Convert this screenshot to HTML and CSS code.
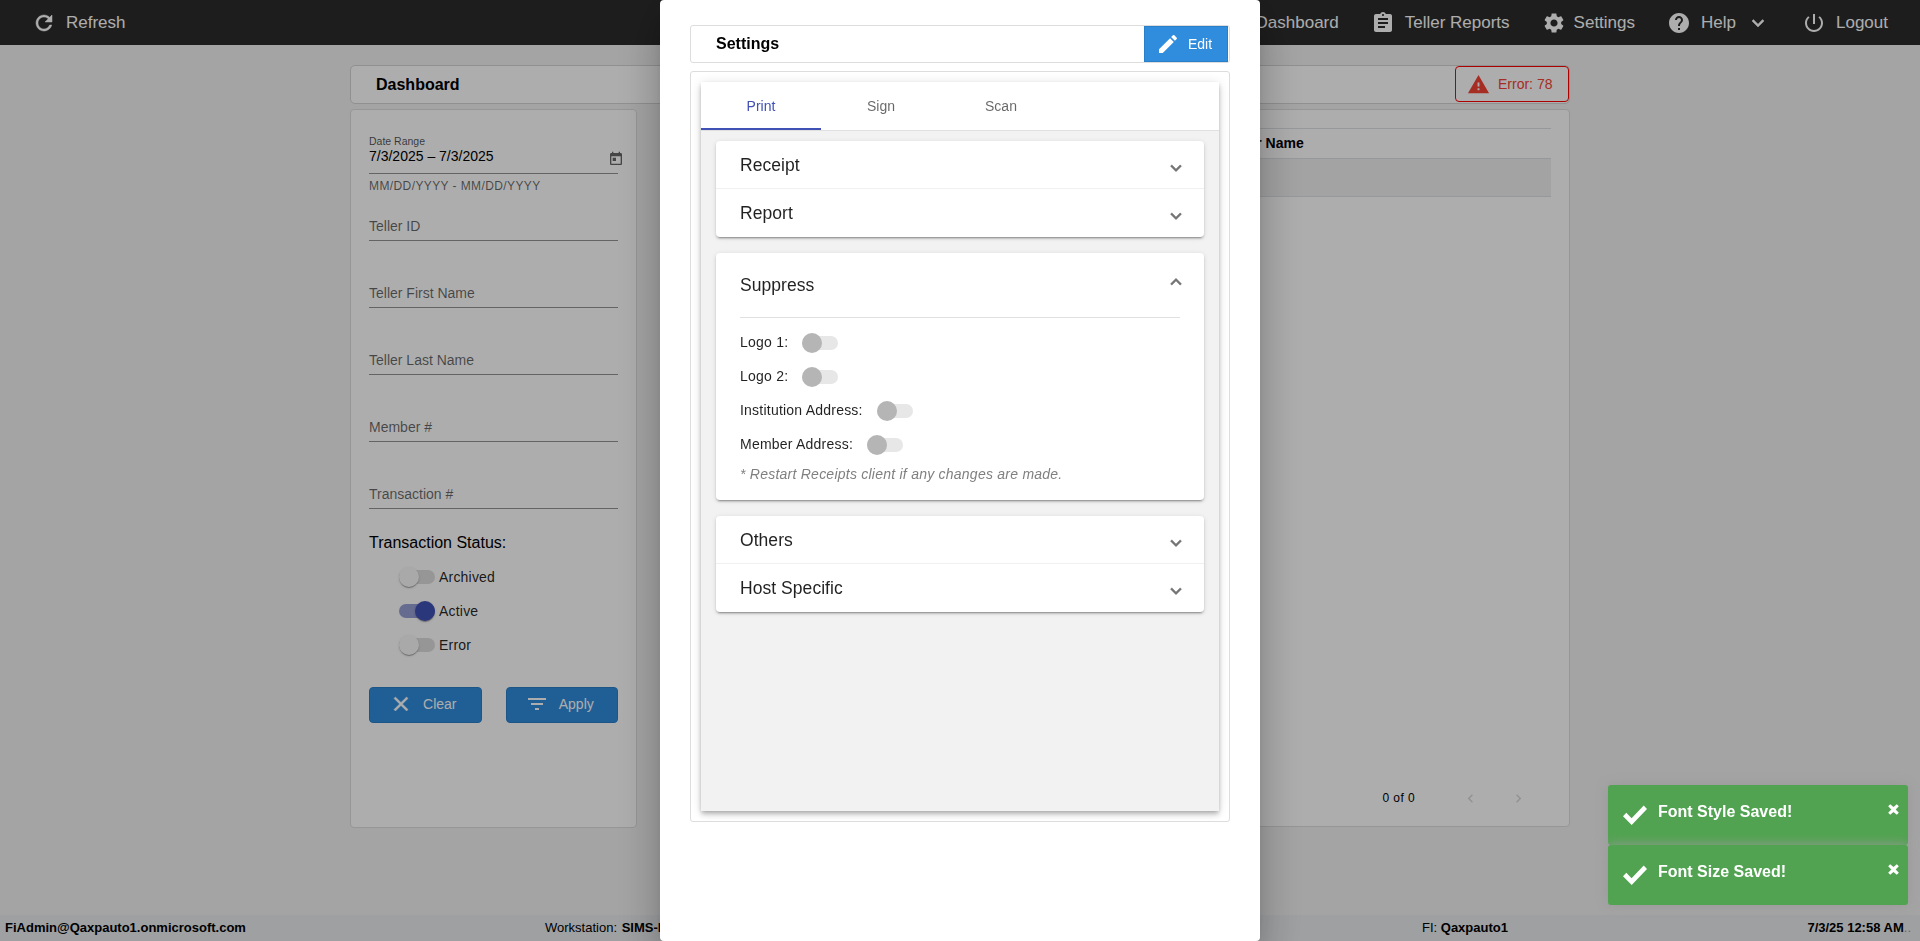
FILE: index.html
```html
<!DOCTYPE html>
<html lang="en">

<head>
    <meta charset="UTF-8">
    <meta name="viewport" content="width=device-width, initial-scale=1.0">
    <title>Dashboard</title>
    <link rel="stylesheet" href="styles.css">
</head>

<body>
    <!-- Icon definitions -->
    <svg class="icon-defs" width="0" height="0">
        <symbol id="refresh" viewBox="0 0 24 24"><path d="M17.65 6.35C16.2 4.9 14.21 4 12 4c-4.42 0-7.99 3.58-7.99 8s3.57 8 7.99 8c3.73 0 6.84-2.55 7.73-6h-2.08c-.82 2.33-3.04 4-5.65 4-3.31 0-6-2.69-6-6s2.69-6 6-6c1.66 0 3.14.69 4.22 1.78L13 11h7V4l-2.35 2.35z"/></symbol>
        <symbol id="report" viewBox="0 0 24 24"><path d="M19 3h-4.18C14.4 1.84 13.3 1 12 1c-1.3 0-2.4.84-2.82 2H5c-1.1 0-2 .9-2 2v14c0 1.1.9 2 2 2h14c1.1 0 2-.9 2-2V5c0-1.1-.9-2-2-2zm-7 0c.55 0 1 .45 1 1s-.45 1-1 1-1-.45-1-1 .45-1 1-1zm2 14H7v-2h7v2zm3-4H7v-2h10v2zm0-4H7V7h10v2z"/></symbol>
        <symbol id="settings" viewBox="0 0 24 24"><path d="M19.14 12.94c.04-.3.06-.61.06-.94 0-.32-.02-.64-.07-.94l2.03-1.58c.18-.14.23-.41.12-.61l-1.92-3.32c-.12-.22-.37-.29-.59-.22l-2.39.96c-.5-.38-1.03-.7-1.62-.94L14.4 2.81c-.04-.24-.24-.41-.48-.41h-3.84c-.24 0-.43.17-.47.41L9.25 5.35C8.66 5.59 8.12 5.92 7.63 6.29L5.24 5.33c-.22-.08-.47 0-.59.22L2.74 8.87c-.12.21-.08.47.12.61l2.03 1.58C4.84 11.36 4.8 11.69 4.8 12s.02.64.07.94l-2.03 1.58c-.18.14-.23.41-.12.61l1.92 3.32c.12.22.37.29.59.22l2.39-.96c.5.38 1.03.7 1.62.94l.36 2.54c.05.24.24.41.48.41h3.84c.24 0 .44-.17.47-.41l.36-2.54c.59-.24 1.13-.56 1.62-.94l2.39.96c.22.08.47 0 .59-.22l1.92-3.32c.12-.22.07-.47-.12-.61l-2.01-1.58zM12 15.6c-1.98 0-3.6-1.62-3.6-3.6s1.62-3.6 3.6-3.6 3.6 1.62 3.6 3.6-1.62 3.6-3.6 3.6z"/></symbol>
        <symbol id="help" viewBox="0 0 24 24"><path d="M12 2C6.48 2 2 6.48 2 12s4.48 10 10 10 10-4.48 10-10S17.52 2 12 2zm1 17h-2v-2h2v2zm2.07-7.75l-.9.92C13.45 12.9 13 13.5 13 15h-2v-.5c0-1.1.45-2.1 1.17-2.83l1.24-1.26c.37-.36.59-.86.59-1.41 0-1.1-.9-2-2-2s-2 .9-2 2H8c0-2.21 1.79-4 4-4s4 1.79 4 4c0 .88-.36 1.68-.93 2.25z"/></symbol>
        <symbol id="expand" viewBox="0 0 24 24"><path d="M16.59 8.59L12 13.17 7.41 8.59 6 10l6 6 6-6z"/></symbol>
        <symbol id="power" viewBox="0 0 24 24"><path d="M13 3h-2v10h2V3zm4.83 2.17l-1.42 1.42C17.99 7.86 19 9.81 19 12c0 3.87-3.13 7-7 7s-7-3.13-7-7c0-2.19 1.01-4.14 2.58-5.42L6.17 5.17C4.23 6.82 3 9.26 3 12c0 4.97 4.03 9 9 9s9-4.03 9-9c0-2.74-1.23-5.18-3.17-6.83z"/></symbol>
        <symbol id="warning" viewBox="0 0 24 24"><path d="M1 21h22L12 2 1 21zm12-3h-2v-2h2v2zm0-4h-2v-4h2v4z"/></symbol>
        <symbol id="edit" viewBox="0 0 24 24"><path d="M3 17.25V21h3.75L17.81 9.94l-3.75-3.75L3 17.25zM20.71 7.04c.39-.39.39-1.02 0-1.41l-2.34-2.34c-.39-.39-1.02-.39-1.41 0l-1.83 1.83 3.75 3.75 1.83-1.83z"/></symbol>
        <symbol id="today" viewBox="0 0 24 24"><path d="M19 3h-1V1h-2v2H8V1H6v2H5c-1.11 0-1.99.9-1.99 2L3 19c0 1.1.89 2 2 2h14c1.1 0 2-.9 2-2V5c0-1.1-.9-2-2-2zm0 16H5V8h14v11zM7 10h5v5H7z"/></symbol>
        <symbol id="filter" viewBox="0 0 24 24"><path d="M10 18h4v-2h-4v2zM3 6v2h18V6H3zm3 7h12v-2H6v2z"/></symbol>
        <symbol id="close" viewBox="0 0 24 24"><path d="M19 6.41L17.59 5 12 10.59 6.41 5 5 6.41 10.59 12 5 17.59 6.41 19 12 13.41 17.59 19 19 17.59 13.41 12z"/></symbol>
        <symbol id="prev" viewBox="0 0 24 24"><path d="M15.41 7.41L14 6l-6 6 6 6 1.41-1.41L10.83 12z"/></symbol>
        <symbol id="next" viewBox="0 0 24 24"><path d="M10 6L8.59 7.41 13.17 12l-4.58 4.59L10 18l6-6z"/></symbol>
        <symbol id="check" viewBox="0 0 24 24"><path d="M0 13.2L3.3 9.8 8.6 15.2 20.7 2.6 24 6 8.7 22z"/></symbol>
        <symbol id="times" viewBox="0 0 12 12"><path d="M2.4.2L6 3.4 9.6.2 11.8 2.4 8.4 6l3.4 3.6-2.2 2.2L6 8.6l-3.6 3.2L.2 9.6 3.6 6 .2 2.4z"/></symbol>
    </svg>

    <!-- Toolbar -->
    <nav class="toolbar">
        <a href="#" class="nav-item refresh"><svg class="icon bold"><use href="#refresh"/></svg>Refresh</a>
        <a href="#" class="nav-item dashboard">Dashboard</a>
        <a href="#" class="nav-item reports"><svg class="icon"><use href="#report"/></svg>Teller Reports</a>
        <a href="#" class="nav-item settings"><svg class="icon"><use href="#settings"/></svg>Settings</a>
        <a href="#" class="nav-item help"><svg class="icon"><use href="#help"/></svg>Help<svg class="icon bold"><use href="#expand"/></svg></a>
        <a href="#" class="nav-item logout"><svg class="icon"><use href="#power"/></svg>Logout</a>
    </nav>

    <!-- Dashboard -->
    <main class="page">
        <div class="page-title">
            <h1>Dashboard</h1>
            <button class="error-btn"><svg class="icon"><use href="#warning"/></svg>Error: 78</button>
        </div>

        <div class="columns">
            <form class="panel filters">
                <div class="field date-field">
                    <div class="date-text">
                        <label>Date Range</label>
                        <span>7/3/2025 – 7/3/2025</span>
                    </div>
                    <svg class="icon"><use href="#today"/></svg>
                </div>
                <div class="hint">MM/DD/YYYY - MM/DD/YYYY</div>
                <div class="field">Teller ID</div>
                <div class="field">Teller First Name</div>
                <div class="field">Teller Last Name</div>
                <div class="field">Member #</div>
                <div class="field">Transaction #</div>

                <h2>Transaction Status:</h2>
                <div class="status-list">
                    <div class="toggle-row"><span class="toggle"></span>Archived</div>
                    <div class="toggle-row"><span class="toggle on"></span>Active</div>
                    <div class="toggle-row"><span class="toggle"></span>Error</div>
                </div>

                <div class="filter-buttons">
                    <button type="button" class="btn"><svg class="icon bold"><use href="#close"/></svg>Clear</button>
                    <button type="button" class="btn"><svg class="icon"><use href="#filter"/></svg>Apply</button>
                </div>
            </form>

            <section class="panel results">
                <div class="table">
                    <div class="table-head">Member Name</div>
                    <div class="table-row"></div>
                </div>
                <div class="paginator">
                    <span>0 of 0</span>
                    <svg class="icon"><use href="#prev"/></svg>
                    <svg class="icon"><use href="#next"/></svg>
                </div>
            </section>
        </div>
    </main>

    <!-- Footer -->
    <footer class="footer">
        <div class="user"><b>FiAdmin@Qaxpauto1.onmicrosoft.com</b></div>
        <div class="workstation">Workstation: <b>SIMS-I</b></div>
        <div class="fi">FI: <b>Qaxpauto1</b></div>
        <div class="time"><b>7/3/25 12:58 AM</b><span>..</span></div>
    </footer>

    <!-- Settings dialog -->
    <div class="backdrop">
        <div class="dialog">
            <div class="dialog-title">
                <h1>Settings</h1>
                <button class="btn edit-btn"><svg class="icon"><use href="#edit"/></svg>Edit</button>
            </div>
            <div class="dialog-body">
                <div class="tab-group">
                    <div class="tabs">
                        <div class="tab active">Print</div>
                        <div class="tab">Sign</div>
                        <div class="tab">Scan</div>
                    </div>
                    <div class="tab-content">
                        <div class="accordion">
                            <div class="accordion-item">Receipt<svg class="icon bold"><use href="#expand"/></svg></div>
                            <div class="accordion-item">Report<svg class="icon bold"><use href="#expand"/></svg></div>
                        </div>
                        <div class="accordion">
                            <div class="accordion-item open">Suppress<svg class="icon bold"><use href="#expand"/></svg></div>
                            <div class="accordion-body">
                                <div class="option"><label>Logo 1:</label><span class="toggle disabled"></span></div>
                                <div class="option"><label>Logo 2:</label><span class="toggle disabled"></span></div>
                                <div class="option"><label>Institution Address:</label><span class="toggle disabled"></span></div>
                                <div class="option"><label>Member Address:</label><span class="toggle disabled"></span></div>
                                <p class="note">* Restart Receipts client if any changes are made.</p>
                            </div>
                        </div>
                        <div class="accordion">
                            <div class="accordion-item">Others<svg class="icon bold"><use href="#expand"/></svg></div>
                            <div class="accordion-item">Host Specific<svg class="icon bold"><use href="#expand"/></svg></div>
                        </div>
                    </div>
                </div>
            </div>
        </div>
    </div>

    <!-- Toasts -->
    <div class="toasts">
        <div class="toast"><svg class="check"><use href="#check"/></svg><span>Font Style Saved!</span><svg class="times"><use href="#times"/></svg></div>
        <div class="toast"><svg class="check"><use href="#check"/></svg><span>Font Size Saved!</span><svg class="times"><use href="#times"/></svg></div>
    </div>
</body>

</html>
```
FILE: styles.css
```css
* {
    box-sizing: border-box;
    margin: 0;
    padding: 0;
}

body {
    font-family: Arial, "Liberation Sans", sans-serif;
    font-size: 14px;
    background-color: #f2f2f2;
    color: rgba(0, 0, 0, 0.87);
    height: 100vh;
    overflow: hidden;
    display: flex;
    flex-direction: column;
}

button {
    font-family: inherit;
    font-size: 14px;
    cursor: pointer;
}

.icon-defs {
    position: absolute;
}

.icon {
    width: 24px;
    height: 24px;
    fill: currentColor;
    flex: none;
}

.icon.bold {
    stroke: currentColor;
    stroke-width: 0.5px;
}

/* Toolbar */
.toolbar {
    height: 45px;
    background-color: #2c2c2c;
    display: flex;
    align-items: center;
    padding: 0 32px;
}

.nav-item {
    display: flex;
    align-items: center;
    gap: 10px;
    color: #fff;
    text-decoration: none;
    font-size: 17px;
    white-space: nowrap;
}

.refresh {
    margin-right: auto;
}

.reports {
    margin-left: 32px;
}

.settings {
    margin-left: 32px;
    gap: 8px;
}

.help {
    margin-left: 32px;
}

.logout {
    margin-left: 32px;
}

/* Page */
.page {
    flex: 1;
    width: 1220px;
    margin-left: 350px;
    padding-top: 20px;
}

.page-title {
    height: 39px;
    background-color: #fff;
    border: 1px solid #d5d5d5;
    border-radius: 5px;
    display: flex;
    justify-content: space-between;
    padding-left: 25px;
    margin-bottom: 5px;
}

h1 {
    font-size: 16px;
    line-height: 37px;
    color: #000;
}

.error-btn {
    width: 114px;
    height: 36px;
    background-color: #fff;
    border: 1px solid #ff0000;
    border-radius: 4px;
    color: #f44336;
    display: flex;
    align-items: center;
    gap: 8px;
    padding-left: 11px;
}

.error-btn .icon {
    width: 23px;
    height: 23px;
}

.columns {
    display: flex;
    align-items: flex-start;
    gap: 30px;
}

.panel {
    background-color: #fff;
    border: 1px solid #ddd;
    border-radius: 4px;
}

/* Filters */
.filters {
    width: 287px;
    height: 719px;
    padding: 24px 18px 0;
}

.field {
    height: 67px;
    padding-bottom: 6px;
    border-bottom: 1px solid #949494;
    display: flex;
    align-items: flex-end;
    color: rgba(0, 0, 0, 0.6);
    line-height: 16px;
}

.date-field {
    height: 40px;
    padding-bottom: 0;
    justify-content: space-between;
    align-items: flex-start;
}

.date-text label {
    display: block;
    font-size: 10.5px;
    line-height: 14px;
    color: rgba(0, 0, 0, 0.7);
}

.date-text span {
    display: block;
    color: #000;
}

.date-field .icon {
    width: 16px;
    height: 16px;
    margin: 17px -6px 0 0;
    color: #666;
}

.hint {
    height: 0;
    padding-top: 4px;
    font-size: 12px;
    line-height: 16px;
    letter-spacing: 0.4px;
    color: rgba(0, 0, 0, 0.6);
}

.hint + .field {
    height: 63px;
}

.filters h2 {
    font-size: 16px;
    font-weight: normal;
    line-height: 20px;
    color: #000;
    margin-top: 24px;
}

.status-list {
    padding: 7px 0 0 30px;
}

.toggle-row {
    display: flex;
    align-items: center;
    gap: 4px;
    height: 34px;
    letter-spacing: 0.2px;
}

.toggle {
    width: 36px;
    height: 14px;
    border-radius: 7px;
    background-color: #dedede;
    position: relative;
}

.toggle::after {
    content: "";
    position: absolute;
    top: -3px;
    left: 0;
    width: 20px;
    height: 20px;
    border-radius: 50%;
    background-color: #fafafa;
    box-shadow: 0 2px 1px -1px rgba(0, 0, 0, 0.2), 0 1px 1px rgba(0, 0, 0, 0.14), 0 1px 3px rgba(0, 0, 0, 0.12);
}

.toggle.on {
    background-color: #959fd5;
}

.toggle.on::after {
    left: 16px;
    background-color: #3f51b5;
}

.toggle.disabled {
    background-color: #e7e7e7;
}

.toggle.disabled::after {
    background-color: #b5b5b5;
    box-shadow: none;
}

.filter-buttons {
    display: flex;
    gap: 24px;
    margin-top: 25px;
}

.btn {
    flex: 1;
    height: 36px;
    border: 1px solid #2a7fc9;
    border-radius: 4px;
    background-color: #308cdd;
    color: #fff;
    display: flex;
    align-items: center;
    justify-content: center;
    gap: 10px;
    padding: 0 5px 2px 0;
}

/* Results */
.results {
    flex: 1;
    height: 718px;
    padding: 18px 18px 16px;
    display: flex;
    flex-direction: column;
    justify-content: space-between;
}

.table-head {
    height: 31px;
    border-top: 1px solid #dee2e6;
    border-bottom: 1px solid #dee2e6;
    padding-left: 522px;
    font-weight: bold;
    line-height: 29px;
    color: #000;
}

.table-row {
    height: 38px;
    background-color: #f0f0f0;
    border-bottom: 1px solid #dee2e6;
}

.paginator {
    height: 24px;
    display: flex;
    align-items: center;
    justify-content: flex-end;
    font-size: 12px;
    letter-spacing: 0.4px;
    padding-right: 24px;
    color: #000;
}

.paginator .icon {
    width: 17px;
    height: 17px;
    margin-left: 31px;
    color: #d8d8d8;
}

.paginator span {
    margin-right: 16px;
}

/* Footer */
.footer {
    height: 26px;
    background-color: #e9ecef;
    color: #000;
    font-size: 13px;
    line-height: 25px;
    display: flex;
    padding: 0 9px 0 5px;
    white-space: nowrap;
}

.user {
    width: 540px;
}

.workstation {
    width: 877px;
}

.workstation b {
    margin-left: 1px;
}

.time {
    margin-left: auto;
}

.time span {
    color: #999;
}

/* Dialog */
.backdrop {
    position: fixed;
    inset: 0;
    background-color: rgba(0, 0, 0, 0.32);
    display: flex;
    justify-content: center;
}

.dialog {
    width: 600px;
    height: 100%;
    padding: 25px 30px;
    background-color: #fff;
    border-radius: 4px;
    box-shadow: 0 11px 15px -7px rgba(0, 0, 0, 0.2), 0 24px 38px 3px rgba(0, 0, 0, 0.14), 0 9px 46px 8px rgba(0, 0, 0, 0.12);
}

.dialog-title {
    height: 38px;
    border: 1px solid #ddd;
    border-radius: 3px;
    display: flex;
    justify-content: space-between;
    padding: 0 1px 0 25px;
    margin-bottom: 8px;
}

.dialog-title h1 {
    line-height: 36px;
}

.edit-btn {
    flex: none;
    width: 84px;
    border-radius: 0;
    gap: 8px;
    padding: 0 4px 0 0;
}

.dialog-body {
    height: 751px;
    border: 1px solid #ddd;
    border-radius: 3px;
    padding: 10px;
}

.tab-group {
    height: 729px;
    background-color: #f2f2f2;
    box-shadow: 0 2px 4px -1px rgba(0, 0, 0, 0.2), 0 4px 5px rgba(0, 0, 0, 0.14), 0 1px 10px rgba(0, 0, 0, 0.12);
}

.tabs {
    height: 49px;
    background-color: #fff;
    border-bottom: 1px solid #e0e0e0;
    display: flex;
}

.tab {
    width: 120px;
    height: 48px;
    line-height: 48px;
    text-align: center;
    color: rgba(0, 0, 0, 0.6);
}

.tab.active {
    color: #3f51b5;
    border-bottom: 2px solid #3f51b5;
}

.tab-content {
    padding: 10px 15px;
    display: flex;
    flex-direction: column;
    gap: 16px;
}

.accordion {
    background-color: #fff;
    border-radius: 4px;
    box-shadow: 0 3px 1px -2px rgba(0, 0, 0, 0.2), 0 2px 2px rgba(0, 0, 0, 0.14), 0 1px 5px rgba(0, 0, 0, 0.12);
}

.accordion-item {
    height: 48px;
    padding: 0 17px 0 24px;
    display: flex;
    align-items: center;
    justify-content: space-between;
    font-size: 17.5px;
    letter-spacing: 0.05px;
}

.accordion-item:first-child:not(.open) {
    box-shadow: inset 0 -1px #f0f0f0;
}

.accordion-item .icon {
    width: 22px;
    height: 22px;
    color: #757575;
    margin-top: 5px;
}

.accordion-item.open {
    height: 64px;
}

.accordion-item.open .icon {
    transform: rotate(180deg);
    margin-top: -6px;
}

.accordion-body {
    height: 183px;
    margin: 0 24px;
    padding-top: 8px;
    border-top: 1px solid #e0e0e0;
}

.option {
    height: 34px;
    display: flex;
    align-items: center;
    gap: 14px;
}

.option label {
    padding-bottom: 2px;
    letter-spacing: 0.22px;
}

.note {
    font-style: italic;
    color: #808080;
    line-height: 24px;
    letter-spacing: 0.24px;
}

/* Toasts */
.toasts {
    position: fixed;
    right: 12px;
    bottom: 36px;
    width: 300px;
}

.toast {
    height: 60px;
    background-color: #51a351;
    border-radius: 3px;
    box-shadow: 0 0 12px #999;
    color: #fff;
    font-size: 16px;
    font-weight: bold;
    line-height: 22px;
    display: flex;
    align-items: flex-start;
    padding: 16px 9px 0 15px;
}

.check {
    width: 24px;
    height: 24px;
    fill: #fff;
    margin: 2px 11px 0 0;
}

.times {
    width: 11px;
    height: 11px;
    fill: #fff;
    margin: 3px 0 0 auto;
}
```
